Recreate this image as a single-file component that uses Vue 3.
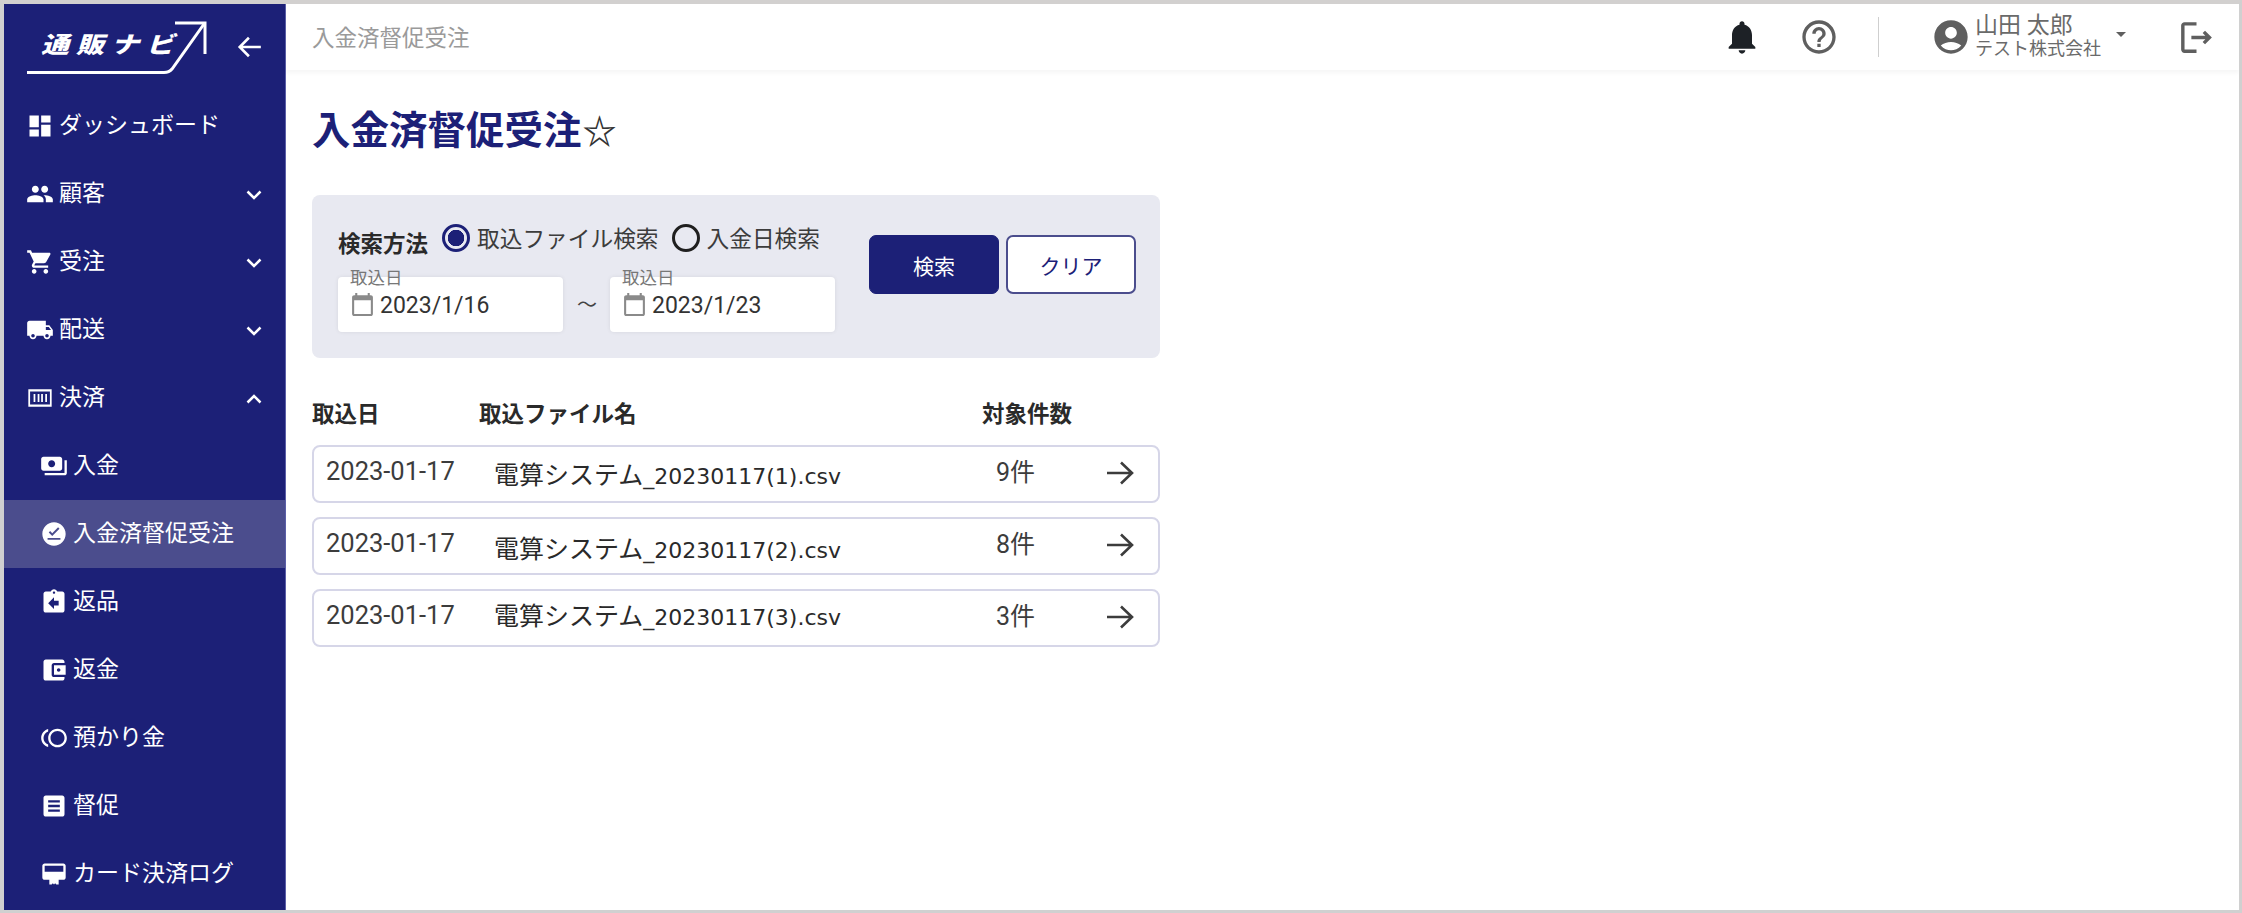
<script setup>
const P = {
  dashboard: 'M3 13h8V3H3v10zm0 8h8v-6H3v6zm10 0h8V11h-8v10zm0-18v6h8V3h-8z',
  people: 'M16 11c1.66 0 2.99-1.34 2.99-3S17.66 5 16 5c-1.66 0-3 1.34-3 3s1.34 3 3 3zm-8 0c1.66 0 2.99-1.34 2.99-3S9.66 5 8 5C6.34 5 5 6.34 5 8s1.34 3 3 3zm0 2c-2.33 0-7 1.17-7 3.5V19h14v-2.5c0-2.33-4.67-3.5-7-3.5zm8 0c-.29 0-.62.02-.97.05 1.16.84 1.97 1.97 1.97 3.45V19h6v-2.5c0-2.33-4.67-3.5-7-3.5z',
  cart: 'M7 18c-1.1 0-1.99.9-1.99 2S5.9 22 7 22s2-.9 2-2-.9-2-2-2zM1 2v2h2l3.6 7.59-1.35 2.45c-.16.28-.25.61-.25.96 0 1.1.9 2 2 2h12v-2H7.42c-.14 0-.25-.11-.25-.25l.03-.12.9-1.63h7.45c.75 0 1.41-.41 1.75-1.03l3.58-6.49c.08-.14.12-.31.12-.48 0-.55-.45-1-1-1H5.21l-.94-2H1zm16 16c-1.1 0-1.99.9-1.99 2s.89 2 1.99 2 2-.9 2-2-.9-2-2-2z',
  truck: 'M20 8h-3V4H3c-1.1 0-2 .9-2 2v11h2c0 1.66 1.34 3 3 3s3-1.34 3-3h6c0 1.66 1.34 3 3 3s3-1.34 3-3h2v-5l-3-4zM6 18.5c-.83 0-1.5-.67-1.5-1.5s.67-1.5 1.5-1.5 1.5.67 1.5 1.5-.67 1.5-1.5 1.5zm13.5-9l1.96 2.5H17V9.5h2.5zm-1.5 9c-.83 0-1.5-.67-1.5-1.5s.67-1.5 1.5-1.5 1.5.67 1.5 1.5-.67 1.5-1.5 1.5z',
  settle: 'M2 4.500h20v15H2zM3.500 6.500v11h17v-11zM6.500 8.500h1.500v7H6.500zM10 8.500h1.500v7H10zM13 8.500h1.500v7H13zM16.500 8.500h1.500v7h-1.500z',
  payments: 'M19 14V6c0-1.1-.9-2-2-2H3c-1.1 0-2 .9-2 2v8c0 1.1.9 2 2 2h14c1.1 0 2-.9 2-2zm-9-1c-1.66 0-3-1.34-3-3s1.34-3 3-3 3 1.34 3 3-1.34 3-3 3zm13-6v11c0 1.1-.9 2-2 2H4v-2h17V7h2z',
  dun: 'M12 2C6.480 2 2 6.480 2 12s4.480 10 10 10 10-4.480 10-10S17.520 2 12 2zM6.500 17v-1.500h11V17zM10.500 13.700l-3-3 1.200-1.200 1.800 1.800 5-5 1.200 1.200z',
  ret: 'M19 3h-4.18C14.4 1.84 13.3 1 12 1c-1.3 0-2.4.84-2.82 2H5c-1.1 0-2 .9-2 2v14c0 1.1.9 2 2 2h14c1.1 0 2-.9 2-2V5c0-1.1-.9-2-2-2zm-7 0c.55 0 1 .45 1 1s-.45 1-1 1-1-.45-1-1 .45-1 1-1zm4 12h-4v3l-5-5 5-5v3h4v4z',
  wallet: 'M21 18v1c0 1.1-.9 2-2 2H5c-1.11 0-2-.9-2-2V5c0-1.1.89-2 2-2h14c1.1 0 2 .9 2 2v1h-9c-1.11 0-2 .9-2 2v8c0 1.1.89 2 2 2h9zm-9-2h10V8H12v8zm4-2.5c-.83 0-1.5-.67-1.5-1.5s.67-1.5 1.5-1.5 1.5.67 1.5 1.5-.67 1.5-1.5 1.5z',
  toll: 'M15 4c-4.42 0-8 3.58-8 8s3.58 8 8 8 8-3.58 8-8-3.58-8-8-8zm0 14c-3.31 0-6-2.69-6-6s2.69-6 6-6 6 2.69 6 6-2.69 6-6 6zM3 12c0-2.61 1.67-4.83 4-5.65V4.26C3.55 5.15 1 8.27 1 12s2.55 6.85 6 7.74v-2.09c-2.33-.82-4-3.04-4-5.65z',
  article: 'M19 3H5c-1.1 0-2 .9-2 2v14c0 1.1.9 2 2 2h14c1.1 0 2-.9 2-2V5c0-1.1-.9-2-2-2zM7 7h10v2H7zm0 4h10v2H7zm0 4h10v2H7z',
  pos: 'M4 3h16c1.1 0 2 .9 2 2v10c0 1.1-.9 2-2 2h-4v4h-2l-1-1-1 1-1-1-1 1H8v-4H4c-1.1 0-2-.9-2-2V5c0-1.1.9-2 2-2zm0 2v5h16V5z'
}
const nav = [
  { label: 'ダッシュボード', icon: P.dashboard },
  { label: '顧客', icon: P.people, chev: 'down' },
  { label: '受注', icon: P.cart, chev: 'down' },
  { label: '配送', icon: P.truck, chev: 'down' },
  { label: '決済', icon: P.settle, chev: 'up' },
  { label: '入金', icon: P.payments, sub: true },
  { label: '入金済督促受注', icon: P.dun, sub: true, active: true },
  { label: '返品', icon: P.ret, sub: true },
  { label: '返金', icon: P.wallet, sub: true },
  { label: '預かり金', icon: P.toll, sub: true },
  { label: '督促', icon: P.article, sub: true },
  { label: 'カード決済ログ', icon: P.pos, sub: true }
]
const rows = [
  { date: '2023-01-17', suffix: '_20230117(1).csv', count: '9件' },
  { date: '2023-01-17', suffix: '_20230117(2).csv', count: '8件' },
  { date: '2023-01-17', suffix: '_20230117(3).csv', count: '3件' }
]
const dates = ['2023/1/16', '2023/1/23']
</script>

<template>
  <div class="frame">
    <aside class="side">
      <div class="brand">
        <div class="logo">
          <span class="logo-text">通販ナビ</span>
          <svg class="logo-arrow" viewBox="0 0 180 54" fill="none" stroke="#fff" stroke-width="3">
            <path d="M0 51.500h137c4 0 6-1 8-3.500L177 3" />
            <path d="M148 2h30v31" />
          </svg>
        </div>
        <svg class="back" viewBox="0 0 24 24" fill="none" stroke="#fff" stroke-width="2.400">
          <path d="M22 12H3M11 3.500L2.500 12l8.500 8.500" />
        </svg>
      </div>
      <nav class="menu">
        <div v-for="n in nav" :key="n.label" class="item" :class="{ sub: n.sub, active: n.active }">
          <svg class="item-icon" viewBox="0 0 24 24" fill="#fff" fill-rule="evenodd"><path :d="n.icon" /></svg>
          <span class="item-label">{{ n.label }}</span>
          <svg v-if="n.chev" class="chev" viewBox="0 0 16 10" fill="none" stroke="#fff" stroke-width="2.500">
            <path :d="n.chev === 'down' ? 'M1.500 1.500L8 8l6.500-6.500' : 'M1.500 8.500L8 2l6.500 6.500'" />
          </svg>
        </div>
      </nav>
    </aside>
    <div class="main">
      <header class="top">
        <span class="crumb">入金済督促受注</span>
        <div class="tools">
          <svg class="bell" viewBox="0 0 24 24" fill="#1d2126"><path d="M12 22c1.100 0 2-.9 2-2h-4c0 1.100.89 2 2 2zm6-6v-5c0-3.070-1.640-5.640-4.500-6.320V4c0-.83-.67-1.500-1.500-1.500s-1.500.67-1.500 1.500v.68C7.630 5.360 6 7.920 6 11v5l-2 2v1h16v-1l-2-2z" /></svg>
          <svg class="help" viewBox="0 0 24 24" fill="#5f5f5f"><path d="M11 18h2v-2h-2v2zm1-16C6.480 2 2 6.480 2 12s4.480 10 10 10 10-4.480 10-10S17.520 2 12 2zm0 18c-4.410 0-8-3.590-8-8s3.590-8 8-8 8 3.590 8 8-3.590 8-8 8zm0-14c-2.210 0-4 1.790-4 4h2c0-1.100.9-2 2-2s2 .9 2 2c0 2-3 1.750-3 5h2c0-2.250 3-2.500 3-5 0-2.210-1.790-4-4-4z" /></svg>
          <span class="divider"></span>
          <svg class="avatar" viewBox="0 0 24 24" fill="#5f5f5f"><path d="M12 2C6.480 2 2 6.480 2 12s4.480 10 10 10 10-4.480 10-10S17.520 2 12 2zm0 4c1.930 0 3.500 1.570 3.500 3.500S13.930 13 12 13s-3.500-1.570-3.500-3.500S10.070 6 12 6zm0 14c-2.030 0-4.430-.82-6.140-2.880C7.550 15.800 9.680 15 12 15s4.450.8 6.140 2.120C16.430 19.180 14.030 20 12 20z" /></svg>
          <div class="user">
            <span class="user-name">山田 太郎</span>
            <span class="user-co">テスト株式会社</span>
          </div>
          <span class="caret"></span>
          <svg class="logout" viewBox="0 0 24 24" fill="#5f5f5f"><path d="M17 8l-1.410 1.410L17.170 11H9v2h8.170l-1.580 1.580L17 16l4-4-4-4zM5 5h7V3H5c-1.100 0-2 .9-2 2v14c0 1.100.9 2 2 2h7v-2H5V5z" /></svg>
        </div>
      </header>
      <main class="content">
        <h1 class="title">入金済督促受注<span class="star">☆</span></h1>
        <section class="panel">
          <div class="form">
            <div class="method">
              <span class="method-label">検索方法</span>
              <span class="radio on"></span>
              <span class="radio-text">取込ファイル検索</span>
              <span class="radio"></span>
              <span class="radio-text">入金日検索</span>
            </div>
            <div class="range">
              <div class="date" v-for="(d, i) in dates" :key="d" :class="{ second: i === 1 }">
                <span class="float-label">取込日</span>
                <svg class="cal" viewBox="0 0 24 24" fill="#8a8a8a"><path d="M20 3h-1V1h-2v2H7V1H5v2H4c-1.100 0-2 .9-2 2v16c0 1.100.9 2 2 2h16c1.100 0 2-.9 2-2V5c0-1.100-.9-2-2-2zm0 18H4V8h16v13z" /></svg>
                <span class="date-val">{{ d }}</span>
              </div>
              <span class="tilde">～</span>
            </div>
          </div>
          <div class="btns">
            <button class="btn primary">検索</button>
            <button class="btn ghost">クリア</button>
          </div>
        </section>
        <div class="thead">
          <span class="c-date">取込日</span>
          <span class="c-file">取込ファイル名</span>
          <span class="c-count">対象件数</span>
        </div>
        <div class="rows">
          <div class="row" v-for="r in rows" :key="r.suffix">
            <span class="r-date">{{ r.date }}</span>
            <span class="r-file"><span class="r-name">電算システム</span><span class="r-suffix">{{ r.suffix }}</span></span>
            <span class="r-count">{{ r.count }}</span>
            <svg class="r-arrow" viewBox="0 0 28 24" fill="none" stroke="#3c3c3c" stroke-width="2.600">
              <path d="M1 12h25M15 1.500L26 12 15 22.500" />
            </svg>
          </div>
        </div>
      </main>
    </div>
  </div>
</template>

<style>
html, body { margin: 0; background: #fff; }
</style>

<style scoped>
.frame {
  width: 2242px;
  height: 913px;
  box-sizing: border-box;
  border-top: 4px solid #d2d0cf;
  border-left: 4px solid #d0d0d0;
  border-right: 3px solid #d0d0d0;
  border-bottom: 3px solid #d0d0d0;
  display: flex;
  overflow: hidden;
  font-family: Roboto, "Noto Sans CJK JP", sans-serif;
  color: #2e2e2e;
  background: #fff;
}
.side {
  width: 281px;
  flex: none;
  background: #1c2077;
  border-right: 1px solid #5b5fa8;
  box-sizing: content-box;
  display: flex;
  flex-direction: column;
}
.brand {
  height: 88px;
  display: flex;
  align-items: center;
  padding-left: 23px;
  flex: none;
}
.logo { position: relative; width: 180px; height: 54px; }
.logo-text {
  position: absolute;
  left: 14px;
  top: 9px;
  color: #fff;
  font-size: 28px;
  line-height: 32px;
  font-weight: 900;
  font-style: italic;
  letter-spacing: 7px;
  white-space: nowrap;
  transform: scaleY(0.82);
  transform-origin: 0 50%;
}
.logo-arrow { position: absolute; left: 0; top: 0; width: 180px; height: 54px; }
.back { width: 26px; height: 26px; margin-left: 30px; margin-top: -2px; }
.menu { display: flex; flex-direction: column; }
.item {
  height: 68px;
  display: flex;
  align-items: center;
  padding-left: 22px;
  position: relative;
  color: #fff;
  font-size: 23px;
}
.item.sub { padding-left: 36px; }
.item.active { background: #4b4d8d; }
.item-icon { width: 28px; height: 28px; flex: none; }
.item-label { margin-left: 5px; white-space: nowrap; line-height: 30px; }
.chev { width: 16px; height: 10px; position: absolute; right: 23px; top: 30px; }
.main { flex: 1; min-width: 0; display: flex; flex-direction: column; }
.top {
  height: 66px;
  flex: none;
  display: flex;
  align-items: center;
  justify-content: space-between;
  padding-left: 26px;
  box-shadow: 0 3px 4px rgba(0, 0, 0, 0.04);
}
.crumb { font-size: 22.500px; color: #9a9a9a; margin-top: -2px; }
.tools { display: flex; align-items: center; }
.bell { width: 40px; height: 40px; }
.help { width: 40px; height: 40px; margin-left: 37px; }
.divider { width: 1px; height: 40px; background: #cfcfcf; margin-left: 39px; }
.avatar { width: 40px; height: 40px; margin-left: 52px; }
.user { display: flex; flex-direction: column; margin-left: 4px; color: #6a6a6a; width: 124px; white-space: nowrap; margin-top: -1px; }
.user-name { font-size: 23px; line-height: 24px; }
.user-co { font-size: 18px; line-height: 21px; }
.caret {
  width: 0;
  height: 0;
  border-left: 5px solid transparent;
  border-right: 5px solid transparent;
  border-top: 5px solid #5f5f5f;
  margin-left: 17px;
  margin-top: -6px;
}
.logout { width: 41px; height: 41px; margin-left: 50px; margin-right: 22px; }
.content { padding: 0 0 0 26px; }
.title {
  margin: 36px 0 0;
  height: 59px;
  font-size: 38.500px;
  line-height: 50px;
  font-weight: 700;
  color: #1c2077;
  white-space: nowrap;
}
.star { font-weight: 700; color: #333; font-size: 34px; margin-left: 1px; }
.panel {
  width: 848px;
  height: 163px;
  margin-top: 30px;
  background: #e8e9f1;
  border-radius: 8px;
  display: flex;
  box-sizing: border-box;
  padding: 26px 0 0 26px;
}
.form { width: 531px; flex: none; }
.method { display: flex; align-items: center; height: 36px; white-space: nowrap; }
.method-label { font-size: 22.500px; font-weight: 700; margin-top: 6px; color: #2a2a2a; margin-right: 1px; }
.radio {
  width: 28px;
  height: 28px;
  box-sizing: border-box;
  border: 3px solid #1f1f1f;
  border-radius: 50%;
  margin-left: 13px;
  flex: none;
  margin-top: -2px;
}
.radio.on {
  border-color: #1c2077;
  background: radial-gradient(circle, #1c2077 0 8px, transparent 8.500px);
}
.radio-text { font-size: 22.700px; margin-left: 7px; color: #3c3c3c; margin-top: -4px; white-space: nowrap; }
.range { display: flex; margin-top: 20px; position: relative; }
.date {
  width: 225px;
  height: 55px;
  box-sizing: border-box;
  background: #fff;
  border-radius: 4px;
  box-shadow: 0 0 4px rgba(0, 0, 0, 0.08);
  display: flex;
  align-items: center;
  padding: 0 0 0 12px;
  position: relative;
  flex: none;
}
.date.second { margin-left: 47px; }
.float-label {
  position: absolute;
  left: 12px;
  top: -9px;
  font-size: 17.500px;
  line-height: 20px;
  color: #777;
  white-space: nowrap;
}
.cal { width: 25px; height: 25px; flex: none; }
.date-val { font-size: 23px; margin-left: 5px; margin-top: 1px; color: #333; }
.tilde {
  position: absolute;
  left: 239px;
  top: 8px;
  font-size: 20px;
  line-height: 40px;
  color: #444;
}
.btns { display: flex; gap: 7px; margin-top: 14px; height: 59px; }
.btn {
  width: 130px;
  height: 59px;
  border-radius: 7px;
  font-family: inherit;
  font-size: 21px;
  padding: 0;
}
.btn.primary { background: #1c2077; border: 1px solid #1c2077; color: #fff; }
.btn.ghost { background: #fff; border: 2px solid #4b4d8d; color: #1c2077; }
.thead { display: flex; width: 848px; margin-top: 43px; height: 26px; font-size: 22.500px; line-height: 26px; font-weight: 700; color: #2a2a2a; white-space: nowrap; }
.c-date { width: 167px; }
.c-file { width: 503px; }
.rows { display: flex; flex-direction: column; gap: 14px; margin-top: 18px; width: 848px; }
.row {
  height: 58px;
  box-sizing: border-box;
  border: 2px solid #d6d6e8;
  border-radius: 8px;
  display: flex;
  align-items: center;
  white-space: nowrap;
}
.r-date { font-size: 25.500px; margin-left: 12px; width: 168px; flex: none; padding-bottom: 6px; color: #3c3c3c; }
.r-file { width: 502px; flex: none; color: #2a2a2a; }
.row:nth-child(1) .r-file { padding-bottom: 3px; }
.row:nth-child(2) .r-file { padding-top: 2px; }
.row:nth-child(3) .r-file { padding-bottom: 8px; }
.r-name { font-family: "Noto Sans CJK JP", sans-serif; font-size: 25px; }
.r-suffix { font-family: "DejaVu Sans", sans-serif; font-size: 22px; }
.r-count { font-size: 25px; width: 110px; flex: none; padding-bottom: 9px; color: #3c3c3c; }
.r-arrow { width: 28px; height: 24px; margin-bottom: 3px; }
</style>
